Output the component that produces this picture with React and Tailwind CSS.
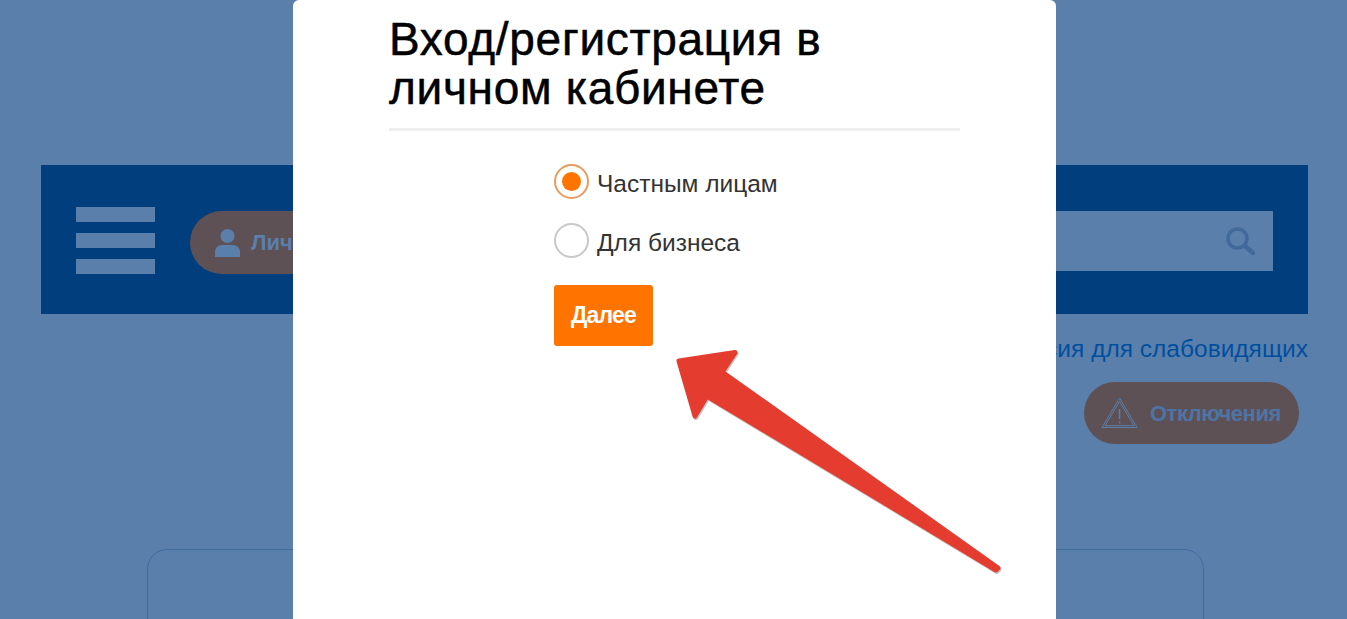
const Radio = ({ label, checked }) => {
    return (
        <div className="flex items-center h-[35px] gap-[8px]">
            <span className={`flex items-center justify-center w-[35px] h-[35px] rounded-full border-[2.5px] bg-white ${checked ? "border-[#e99a5c]" : "border-[#c8c8c8]"}`}>
                {checked && <span className="w-[19px] h-[19px] rounded-full bg-[#ff7300]" />}
            </span>
            <span className="pt-[4px] text-[24.5px] leading-[35px] text-[#333333]">{label}</span>
        </div>
    )
}

const App = () => {
    return (
        <div className="relative h-[619px] overflow-hidden bg-[#5b7fab] font-['Liberation_Sans',Arial,sans-serif]">
            <div className="pt-[165px] px-[41px] w-[1349px]">
                <header className="flex items-center justify-between h-[149px] w-[1267px] pt-[6px] pl-[35px] pr-[35px] bg-[#003e7e]">
                    <div className="flex items-center gap-[35px]">
                        <div className="flex flex-col gap-[11px] w-[79px] mb-[4px]">
                            <span className="h-[15px] bg-[#5b7fab]" />
                            <span className="h-[15px] bg-[#5b7fab]" />
                            <span className="h-[15px] bg-[#5b7fab]" />
                        </div>
                        <div className="flex items-center h-[63px] w-[300px] pl-[25px] gap-[11px] rounded-full bg-[#5d5155] text-[22px] font-bold text-[#5b7fab]">
                            <svg width="25" height="28" viewBox="0 0 25 28" fill="#5b7fab">
                                <circle cx="12.5" cy="7" r="7" />
                                <path d="M0 28v-5c0-4 3-7 7-7h11c4 0 7 3 7 7v5z" />
                            </svg>
                            <span>Личный кабинет</span>
                        </div>
                    </div>
                    <div className="flex items-center justify-end w-[500px] h-[60px] pr-[18px] bg-[#5b7fab] mb-[3px]">
                        <svg width="29" height="29" viewBox="0 0 29 29" fill="none" stroke="#41699b" strokeWidth="3.5" strokeLinecap="round">
                            <circle cx="11.5" cy="11.5" r="9.5" />
                            <path d="M19 19l8 7" strokeWidth="4.5" />
                        </svg>
                    </div>
                </header>
                <div className="flex justify-end w-[1267px] pt-[21px]">
                    <a className="text-[24.5px] leading-[28px] text-[#004f9e]">Версия для слабовидящих</a>
                </div>
                <div className="flex justify-end w-[1258px] pt-[19px]">
                    <div className="flex items-center h-[62px] w-[215px] pl-[17px] gap-[12px] rounded-full bg-[#5d5155] text-[22px] font-bold tracking-[-0.5px] text-[#4d74a6]">
                        <svg width="37" height="32" viewBox="0 0 37 32" fill="none" stroke="#5b7fab" strokeWidth="1" strokeLinejoin="round">
                            <path d="M18.5 1L36 30.500H1z" />
                            <path d="M18.500 4.500L33 28.700H4z" />
                            <path d="M18.500 12v10M18.500 24.500v2" strokeWidth="1.500" />
                        </svg>
                        <span>Отключения</span>
                    </div>
                </div>
                <div className="w-[1057px] h-[200px] ml-[106px] mt-[105px] rounded-[20px] border border-[#3f6e9e]" />
            </div>

            <div className="absolute top-0 left-[293px] bottom-0 w-[763px] px-[96px] rounded-t-md bg-white">
                <h1 className="pt-[15px] pb-[15px] text-[46px] leading-[49px] font-normal tracking-[0.7px] text-black [-webkit-text-stroke:0.5px_black] border-b-[3px] border-[#eeeeee]">
                    Вход/регистрация в личном кабинете
                </h1>
                <div className="flex flex-col gap-[24px] items-start pl-[165px] pt-[33px]">
                    <Radio label="Частным лицам" checked />
                    <Radio label="Для бизнеса" />
                    <button className="w-[99px] h-[61px] mt-[3px] rounded-[3px] bg-[#ff7300] text-[23px] font-bold tracking-[-0.8px] text-white">Далее</button>
                </div>
            </div>

            <svg className="absolute left-[670px] top-[345px]" width="340" height="235" viewBox="670 345 340 235">
                <path d="M679 361L735 352.500L722 372L998 568L996 570L707 396L695 416z" fill="#c4c4c4" transform="translate(1 1.500)" stroke="#c4c4c4" strokeWidth="5" strokeLinejoin="round" />
                <path d="M679 361L735 352.500L722 372L998 568L996 570L707 396L695 416z" fill="#e53c30" stroke="#e53c30" strokeWidth="5" strokeLinejoin="round" />
            </svg>
        </div>
    )
}

export default App;
